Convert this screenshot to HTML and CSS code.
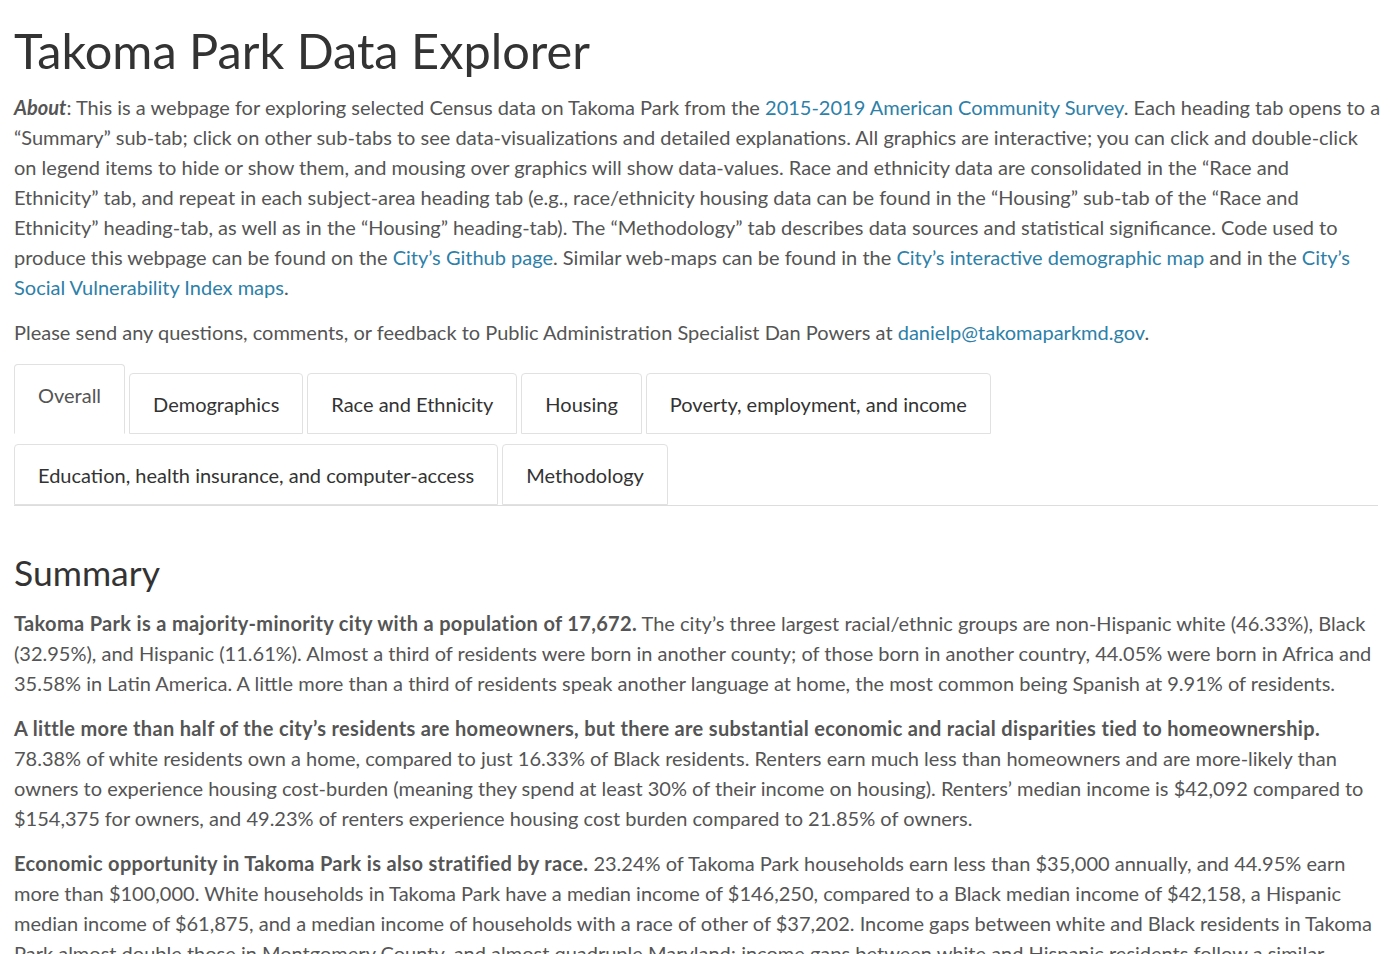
FILE: index.html
```
<!DOCTYPE html>
<html lang="en">
<head>
<meta charset="utf-8">
<title>Takoma Park Data Explorer</title>
<link rel="stylesheet" href="styles.css">
</head>
<body>
<div class="container">
  <h1 class="title">Takoma Park Data Explorer</h1>
  <p><strong class="about"><em>About</em></strong>: This is a webpage for exploring selected Census data on Takoma Park from the <a href="#">2015-2019 American Community Survey</a>. Each heading tab opens to a<br>“Summary” sub-tab; click on other sub-tabs to see data-visualizations and detailed explanations. All graphics are interactive; you can click and double-click<br>on legend items to hide or show them, and mousing over graphics will show data-values. Race and ethnicity data are consolidated in the “Race and<br>Ethnicity” tab, and repeat in each subject-area heading tab (e.g., race/ethnicity housing data can be found in the “Housing” sub-tab of the “Race and<br>Ethnicity” heading-tab, as well as in the “Housing” heading-tab). The “Methodology” tab describes data sources and statistical significance. Code used to<br>produce this webpage can be found on the <a href="#">City’s Github page</a>. Similar web-maps can be found in the <a href="#">City’s interactive demographic map</a> and in the <a href="#">City’s<br>Social Vulnerability Index maps</a>.</p>
  <p>Please send any questions, comments, or feedback to Public Administration Specialist Dan Powers at <a href="#">danielp@takomaparkmd.gov</a>.</p>

  <ul class="tabs">
    <li class="tab active">Overall</li>
    <li class="tab">Demographics</li>
    <li class="tab">Race and Ethnicity</li>
    <li class="tab">Housing</li>
    <li class="tab">Poverty, employment, and income</li>
    <li class="tab">Education, health insurance, and computer-access</li>
    <li class="tab">Methodology</li>
  </ul>

  <h2 class="section-title">Summary</h2>
  <p><strong>Takoma Park is a majority-minority city with a population of 17,672.</strong> The city’s three largest racial/ethnic groups are non-Hispanic white (46.33%), Black<br>(32.95%), and Hispanic (11.61%). Almost a third of residents were born in another county; of those born in another country, 44.05% were born in Africa and<br>35.58% in Latin America. A little more than a third of residents speak another language at home, the most common being Spanish at 9.91% of residents.</p>
  <p><strong>A little more than half of the city’s residents are homeowners, but there are substantial economic and racial disparities tied to homeownership.</strong><br>78.38% of white residents own a home, compared to just 16.33% of Black residents. Renters earn much less than homeowners and are more-likely than<br>owners to experience housing cost-burden (meaning they spend at least 30% of their income on housing). Renters’ median income is $42,092 compared to<br>$154,375 for owners, and 49.23% of renters experience housing cost burden compared to 21.85% of owners.</p>
  <p><strong>Economic opportunity in Takoma Park is also stratified by race.</strong> 23.24% of Takoma Park households earn less than $35,000 annually, and 44.95% earn<br>more than $100,000. White households in Takoma Park have a median income of $146,250, compared to a Black median income of $42,158, a Hispanic<br>median income of $61,875, and a median income of households with a race of other of $37,202. Income gaps between white and Black residents in Takoma<br>Park almost double those in Montgomery County, and almost quadruple Maryland; income gaps between white and Hispanic residents follow a similar<br>pattern.</p>
</div>
</body>
</html>
```
FILE: styles.css
```
html, body {
  margin: 0;
  padding: 0;
  background: #ffffff;
  overflow-x: hidden;
}

body {
  font-family: "Lato", "Open Sans", sans-serif;
  font-size: 20px;
  line-height: 30px;
  color: #555555;
}

.container {
  padding: 0 12px 0 14px;
}

.title {
  margin: 23px 0 15px;
  font-size: 48.7px;
  line-height: 54px;
  font-weight: 400;
  color: #333333;
}

p {
  margin: 0 0 15px;
  white-space: nowrap;
}

a {
  color: #2d80a8;
  text-decoration: none;
}

strong {
  font-weight: 700;
  letter-spacing: 0.33px;
}

.about {
  letter-spacing: 0;
}

.tabs {
  list-style: none;
  margin: 17px 0 0;
  padding: 0;
  display: flex;
  flex-wrap: wrap;
  align-items: flex-end;
  column-gap: 4px;
  row-gap: 10px;
  border-bottom: 1px solid #dddddd;
}

.tab {
  padding: 15px 23px 14px;
  border: 1px solid #e1e1e1;
  border-radius: 4px 4px 0 0;
  color: #333333;
  background: #ffffff;
}

.tab.active {
  padding-bottom: 23px;
  color: #555555;
  border-bottom-color: transparent;
}

.section-title {
  margin: 47px 0 15px;
  font-size: 35.5px;
  line-height: 40px;
  font-weight: 400;
  color: #333333;
}
```
